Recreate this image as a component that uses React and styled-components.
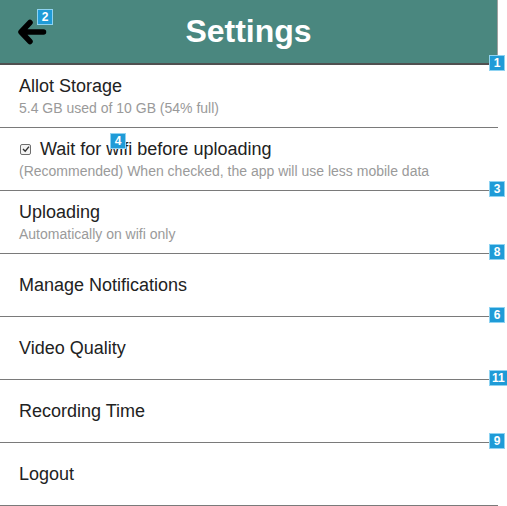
import React from "react";
import styled, { createGlobalStyle } from "styled-components";

const Global = createGlobalStyle`
  html, body { margin: 0; padding: 0; background: #fff; }
  body { font-family: "Liberation Sans", Arial, sans-serif; }
`;

const Page = styled.div`
  position: relative;
  width: 498px;
`;

const Header = styled.header`
  position: relative;
  box-sizing: border-box;
  height: 65px;
  background: #4a877f;
  border-bottom: 2px solid #505050;
  border-right: 1px solid #a0a0a0;
  display: grid;
  grid-template-columns: 60px 1fr 60px;
  align-items: center;
`;

const Title = styled.h1`
  margin: 0;
  color: #fff;
  font-size: 32px;
  font-weight: bold;
  text-align: center;
`;

const BackButton = styled.button`
  justify-self: start;
  margin-left: 17px;
  width: 32px;
  height: 28px;
  padding: 0;
  border: 0;
  background: none;
  display: flex;
  align-items: center;
`;

const List = styled.ul`
  list-style: none;
  margin: 0;
  padding: 0;
`;

const Row = styled.li`
  position: relative;
  box-sizing: border-box;
  height: 63px;
  border-bottom: 1px solid #7a7a7a;
  padding: 0 19px;
  display: flex;
  flex-direction: column;
  justify-content: ${(p) => (p.$sub ? "flex-start" : "center")};
  padding-top: ${(p) => (p.$sub ? "10px" : "0")};
`;

const RowTitle = styled.div`
  display: flex;
  align-items: center;
  color: #222;
  font-size: 18px;
  line-height: 22px;
`;

const RowSub = styled.div`
  color: #9a9a9a;
  font-size: 14px;
  line-height: 18px;
  margin-top: 2px;
`;

const Check = styled.span`
  box-sizing: border-box;
  width: 11px;
  height: 11px;
  border: 1px solid #6e6e6e;
  border-radius: 2px;
  margin: 0 9px 0 1px;
  display: inline-flex;
  align-items: center;
  justify-content: center;
  background: #f4f4f4;
`;

const Badge = styled.span`
  position: absolute;
  box-sizing: border-box;
  min-width: 16px;
  height: 16px;
  padding: 0 2px;
  background: #1f9bd7;
  border: 1px solid #8fd3f2;
  color: #fff;
  font-size: 12px;
  font-weight: bold;
  line-height: 14px;
  text-align: center;
  left: ${(p) => p.$x}px;
  top: ${(p) => p.$y}px;
  z-index: 2;
`;

const rows = [
  { title: "Allot Storage", sub: "5.4 GB used of 10 GB (54% full)" },
  {
    title: "Wait for wifi before uploading",
    sub: "(Recommended) When checked, the app will use less mobile data",
    check: true,
    badge: { n: "4", x: 110, y: 5 },
    edge: "3",
  },
  { title: "Uploading", sub: "Automatically on wifi only", edge: "8" },
  { title: "Manage Notifications", edge: "6" },
  { title: "Video Quality", edge: "11" },
  { title: "Recording Time", edge: "9" },
  { title: "Logout" },
];

export default function App() {
  return (
    <>
      <Global />
      <Page>
        <Header>
          <BackButton aria-label="Back">
            <svg width="30" height="26" viewBox="0 0 30 26">
              <path
                d="M13 3.5 L4 13 L13 22.5 M5 13 H26.5"
                fill="none"
                stroke="#000"
                strokeWidth="5.5"
                strokeLinecap="round"
                strokeLinejoin="round"
              />
            </svg>
          </BackButton>
          <Badge $x={37} $y={9}>2</Badge>
          <Title>Settings</Title>
          <span />
          <Badge $x={489} $y={55}>1</Badge>
        </Header>
        <List>
          {rows.map((r) => (
            <Row key={r.title} $sub={!!r.sub}>
              <RowTitle>
                {r.check && (
                  <Check>
                    <svg width="8" height="8" viewBox="0 0 8 8">
                      <path d="M1 4 L3.2 6.2 L7 1.6" fill="none" stroke="#333" strokeWidth="1.4" />
                    </svg>
                  </Check>
                )}
                {r.title}
              </RowTitle>
              {r.sub && <RowSub>{r.sub}</RowSub>}
              {r.badge && (
                <Badge $x={r.badge.x} $y={r.badge.y}>
                  {r.badge.n}
                </Badge>
              )}
              {r.edge && (
                <Badge $x={489} $y={53}>
                  {r.edge}
                </Badge>
              )}
            </Row>
          ))}
        </List>
      </Page>
    </>
  );
}
